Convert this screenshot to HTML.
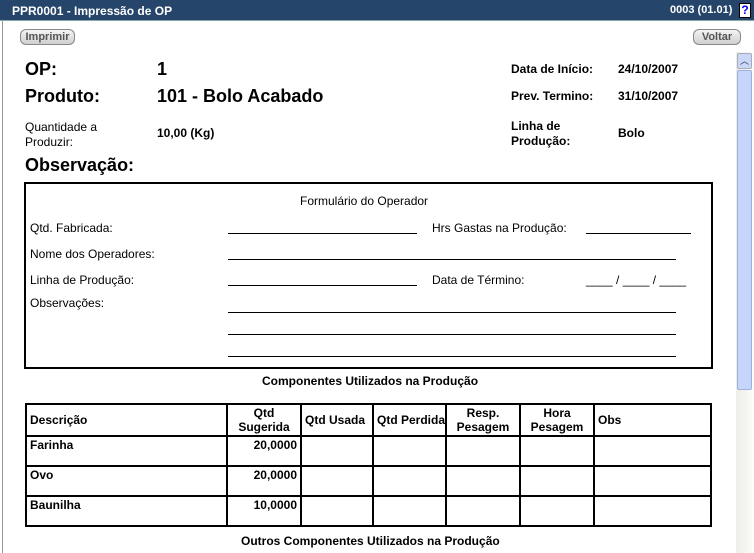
<!DOCTYPE html>
<html><head><meta charset="utf-8"><style>
*{margin:0;padding:0;box-sizing:border-box}
body{width:754px;height:553px;overflow:hidden;background:#fff;font-family:"Liberation Sans",Arial,sans-serif;color:#000;position:relative}
.a{position:absolute;white-space:nowrap}
.b{font-weight:bold}
.s{font-size:12px}
.hl{position:absolute;height:1px;background:#000}
.btn{position:absolute;height:16px;border:1px solid #888;border-radius:6px;background:linear-gradient(#f4f4f4,#cfcfcf);font-size:11px;font-weight:bold;color:#555;text-align:center;line-height:14px}
td{border:2px solid #000;font-size:12px;font-weight:bold;vertical-align:top;padding:1px 3px;white-space:nowrap;line-height:14px}
table{border-collapse:collapse;position:absolute;left:25px;top:403px;width:687px;table-layout:fixed}
</style></head><body>
<div class="a" style="left:0;top:0;width:754px;height:21px;background:#26456a;border-bottom:1px solid #8aa"></div>
<div class="a b s" style="left:12px;top:4px;color:#fff">PPR0001 - Impressão de OP</div>
<div class="a b s" style="left:670px;top:4px;color:#fff;font-size:11px">0003 (01.01)</div>
<div class="a" style="left:739px;top:3px;width:12px;height:15px;background:#fff;border:1px solid #000;color:#00f;font-size:12px;font-weight:bold;text-align:center;line-height:13px">?</div>
<div class="a" style="left:2px;top:21px;width:1px;height:532px;background:#999"></div>
<div class="btn" style="left:20px;top:29px;width:55px">Imprimir</div>
<div class="btn" style="left:693px;top:29px;width:48px">Voltar</div>
<div class="a" style="left:736px;top:52px;width:17px;height:501px;background:linear-gradient(90deg,#eeede6,#fbfbf8)"></div>
<div class="a" style="left:737px;top:53px;width:15px;height:16px;background:#c9d8f6;border:1px solid #aab;border-radius:2px;color:#335;font-size:9px;text-align:center;line-height:14px">︿</div>
<div class="a" style="left:737px;top:70px;width:15px;height:320px;background:#c5d6fa;border:1px solid #9bb0e0;border-radius:2px"></div>

<div class="a b" style="left:25px;top:59px;font-size:18px">OP:</div>
<div class="a b" style="left:157px;top:59px;font-size:18px">1</div>
<div class="a b" style="left:25px;top:86px;font-size:18px">Produto:</div>
<div class="a b" style="left:157px;top:86px;font-size:18px">101 - Bolo Acabado</div>
<div class="a s" style="left:25px;top:120px;line-height:15px">Quantidade a<br>Produzir:</div>
<div class="a b s" style="left:157px;top:126px">10,00 (Kg)</div>
<div class="a b" style="left:25px;top:155px;font-size:18px">Observação:</div>
<div class="a b s" style="left:511px;top:62px">Data de Início:</div>
<div class="a b s" style="left:618px;top:62px">24/10/2007</div>
<div class="a b s" style="left:511px;top:89px">Prev. Termino:</div>
<div class="a b s" style="left:618px;top:89px">31/10/2007</div>
<div class="a s b" style="left:511px;top:119px;line-height:15px">Linha de<br>Produção:</div>
<div class="a b s" style="left:618px;top:126px">Bolo</div>

<div class="a" style="left:24px;top:182px;width:689px;height:187px;border:2px solid #000"></div>
<div class="a s" style="left:300px;top:194px">Formulário do Operador</div>
<div class="a s" style="left:30px;top:221px">Qtd. Fabricada:</div>
<div class="hl" style="left:228px;top:233px;width:189px"></div>
<div class="a s" style="left:432px;top:221px">Hrs Gastas na Produção:</div>
<div class="hl" style="left:586px;top:233px;width:105px"></div>
<div class="a s" style="left:30px;top:247px">Nome dos Operadores:</div>
<div class="hl" style="left:228px;top:259px;width:448px"></div>
<div class="a s" style="left:30px;top:273px">Linha de Produção:</div>
<div class="hl" style="left:228px;top:285px;width:189px"></div>
<div class="a s" style="left:432px;top:273px">Data de Término:</div>
<div class="a s" style="left:586px;top:273px">____ / ____ / ____</div>
<div class="a s" style="left:30px;top:296px">Observações:</div>
<div class="hl" style="left:228px;top:312px;width:448px"></div>
<div class="hl" style="left:228px;top:334px;width:448px"></div>
<div class="hl" style="left:228px;top:356px;width:448px"></div>
<div class="a b s" style="left:262px;top:374px">Componentes Utilizados na Produção</div>

<table>
<colgroup><col style="width:201px"><col style="width:74px"><col style="width:72px"><col style="width:73px"><col style="width:74px"><col style="width:74px"><col></colgroup>
<tr style="height:32px"><td style="vertical-align:middle">Descrição</td><td style="text-align:center">Qtd<br>Sugerida</td><td style="vertical-align:middle">Qtd Usada</td><td style="vertical-align:middle">Qtd Perdida</td><td style="text-align:center">Resp.<br>Pesagem</td><td style="text-align:center">Hora<br>Pesagem</td><td style="vertical-align:middle">Obs</td></tr>
<tr style="height:30px"><td>Farinha</td><td style="text-align:right">20,0000</td><td></td><td></td><td></td><td></td><td></td></tr>
<tr style="height:30px"><td>Ovo</td><td style="text-align:right">20,0000</td><td></td><td></td><td></td><td></td><td></td></tr>
<tr style="height:30px"><td>Baunilha</td><td style="text-align:right">10,0000</td><td></td><td></td><td></td><td></td><td></td></tr>
</table>
<div class="a b s" style="left:241px;top:534px">Outros Componentes Utilizados na Produção</div>
</body></html>
